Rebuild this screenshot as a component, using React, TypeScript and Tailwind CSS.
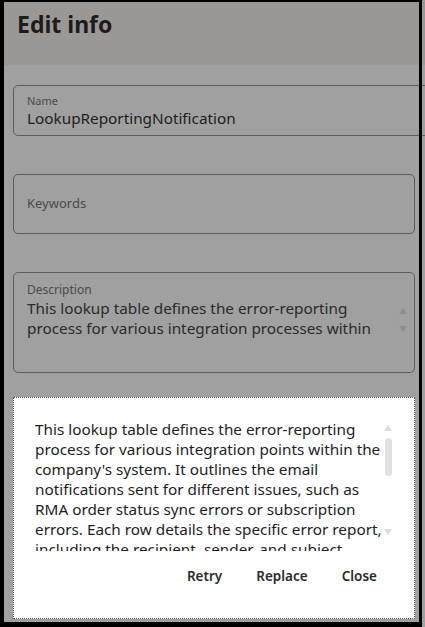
import React from "react";

const font = { fontFamily: '"Noto Sans", "Open Sans", sans-serif' };

const dialogText =
  "This lookup table defines the error-reporting process for various integration points within the company's system. It outlines the email notifications sent for different issues, such as RMA order status sync errors or subscription errors. Each row details the specific error report, including the recipient, sender, and subject details used for each notification.";

const Arrow = ({ up, color }: { up?: boolean; color: string }) => (
  <svg width="8" height="6" viewBox="0 0 8 6">
    <path d={up ? "M0 6 L4 0 L8 6 Z" : "M0 0 L8 0 L4 6 Z"} fill={color} />
  </svg>
);

const App = () => {
  return (
    <div
      className="relative w-[425px] h-[627px] overflow-hidden bg-[#a0a0a0]"
      style={font}
    >
      {/* page header */}
      <div className="h-[65px] bg-[#9b9795] pl-[17px] pt-[7px]">
        <h1 className="text-[23px] font-bold text-[#1c1c1c] leading-[34px]">
          Edit info
        </h1>
      </div>

      <div className="flex flex-col gap-[38px] pl-[13px] pr-[10px] pt-[20px]">
        {/* Name */}
        <div className="w-[440px] h-[51px] border border-[#5c5c5c] rounded-[5px] pl-[13px] pt-[8px] flex flex-col">
          <span className="text-[11px] leading-[14px] text-[#4d4a47]">Name</span>
          <span className="text-[15.3px] leading-[20px] text-[#1e1e1e]">
            LookupReportingNotification
          </span>
        </div>

        {/* Keywords */}
        <div className="h-[60px] border border-[#5c5c5c] rounded-[5px] pl-[13px] flex items-center">
          <span className="text-[13px] text-[#4d4a47]">Keywords</span>
        </div>

        {/* Description */}
        <div className="h-[101px] border border-[#5c5c5c] rounded-[5px] pl-[13px] pr-[6px] pt-[9px] flex">
          <div className="flex-1 flex flex-col">
            <span className="text-[12px] leading-[16px] text-[#4d4a47]">
              Description
            </span>
            <p className="text-[15.3px] leading-[20px] text-[#2a2a2a] h-[40px] overflow-hidden">
              This lookup table defines the error-reporting process for various
              integration processes within the company's system.
            </p>
          </div>
          <div className="flex flex-col items-center gap-[12px] pt-[26px] w-[10px]">
            <Arrow up color="#8e8e8e" />
            <Arrow color="#8e8e8e" />
          </div>
        </div>
      </div>

      {/* message dialog */}
      <div className="absolute left-[13px] top-[397px] w-[402px] h-[222px] bg-white border border-dotted border-[#555] flex flex-col">
        <div className="flex pl-[21px] pr-[22px] pt-[21px]">
          <p className="flex-1 text-[15.3px] leading-[20px] text-[#1e1e1e] h-[132px] overflow-hidden">
            {dialogText}
          </p>
          <div className="w-[8px] flex flex-col items-center pt-[6px]">
            <Arrow up color="#dcdcdc" />
            <div className="mt-[7px] w-[7px] h-[38px] rounded-full bg-[#e2e2e2]" />
            <div className="mt-[53px]">
              <Arrow color="#dcdcdc" />
            </div>
          </div>
        </div>
        <div className="flex justify-end gap-[34px] pr-[37px] pt-[15px]">
          <button className="text-[13.5px] leading-[20px] font-semibold text-[#2b2b2b]">Retry</button>
          <button className="text-[13.5px] leading-[20px] font-semibold text-[#2b2b2b]">Replace</button>
          <button className="text-[13.5px] leading-[20px] font-semibold text-[#2b2b2b]">Close</button>
        </div>
      </div>

      {/* window frame */}
      <div className="pointer-events-none absolute left-0 top-0 w-[422px] h-[627px] border-l-4 border-t-2 border-r-[3px] border-b-[5px] border-black" />
    </div>
  );
};

export default App;
